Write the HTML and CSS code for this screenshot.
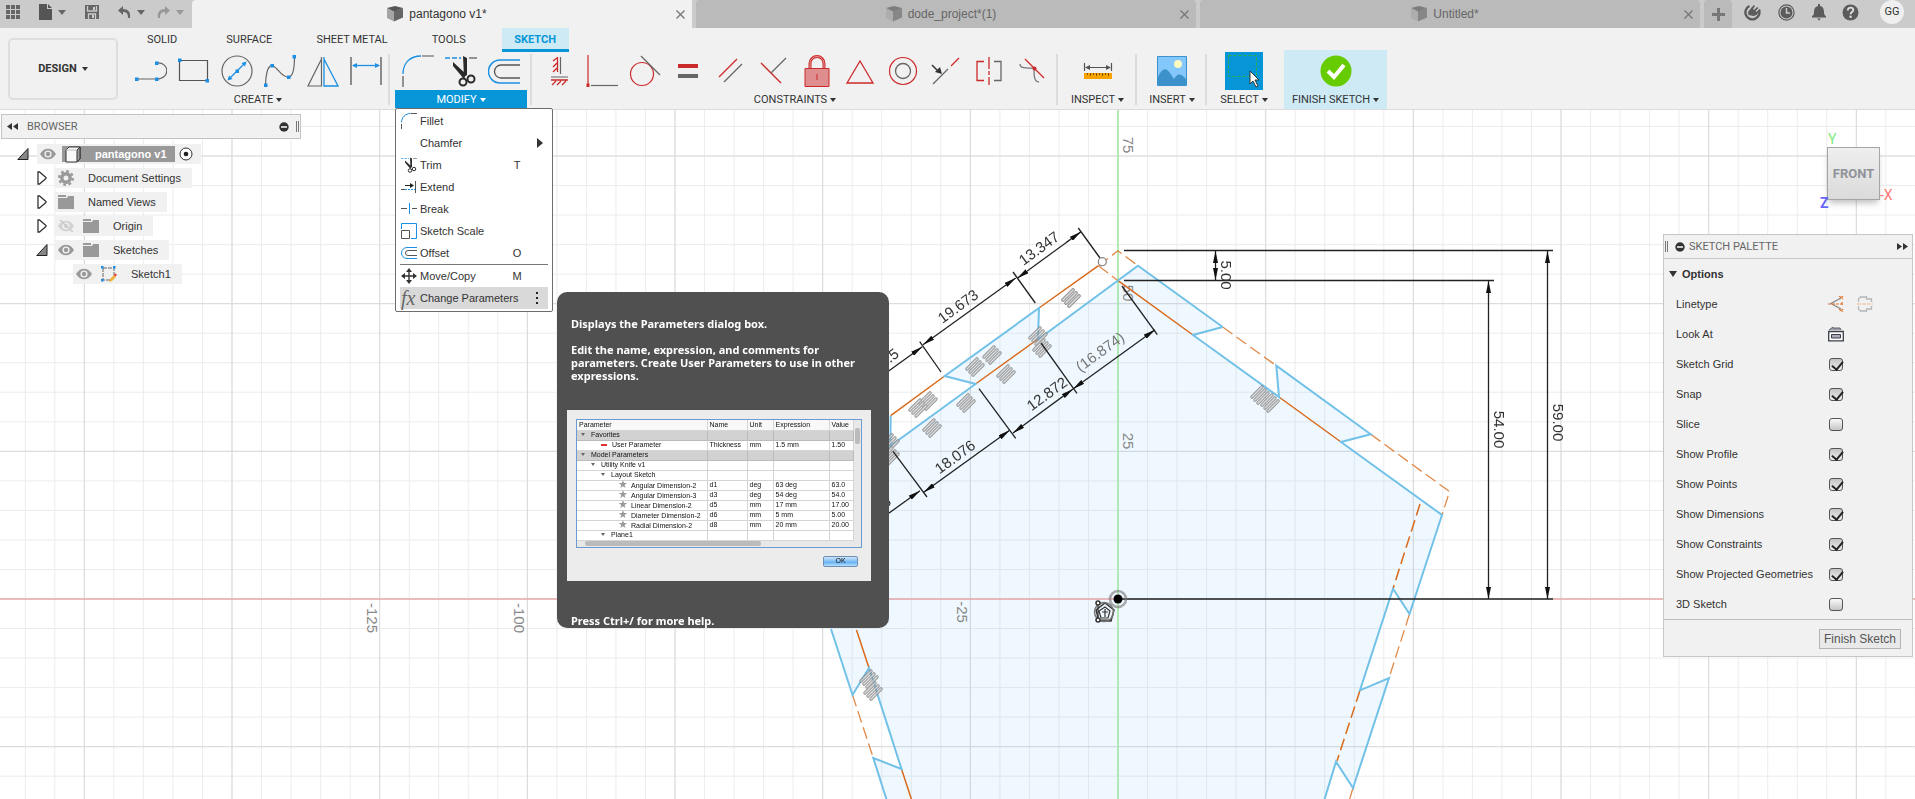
FILE: index.html
```html
<!DOCTYPE html>
<html lang="en">
<head>
<meta charset="utf-8">
<title>pantagono v1*</title>
<link rel="stylesheet" href="styles.css">
</head>
<body>
<svg class="defs" width="0" height="0" aria-hidden="true">
  <defs>
    <symbol id="cube" viewBox="0 0 16 16"><path d="M0 2 8 0l8 2-9 4z" fill="#555"/><path d="M0 2l7 3.500v10L0 12z" fill="#a5a5a5"/><path d="M7 5.500 16 2v9.500l-9 4z" fill="#666"/></symbol>
    <symbol id="eye" viewBox="0 0 16 12"><path d="M0 6C4-1 12-1 16 6 12 13 4 13 0 6z" fill="#999"/><circle cx="8" cy="6" r="3.600" fill="#f1f1f1"/><circle cx="8" cy="6" r="2.200" fill="#999"/></symbol>
    <symbol id="folder" viewBox="0 0 16 14"><path d="M0 0h8v2H0zM0 3h9l1-2h6v13H0z" fill="#999"/></symbol>
    <symbol id="closed" viewBox="0 0 10 14"><path d="M1 1v12h1.500L9 7.500v-1L2.500 1z" fill="#fff" stroke="#333" stroke-width="1.300"/></symbol>
    <symbol id="opened" viewBox="0 0 12 12"><path d="M11 .5v11H.8z" fill="#888" stroke="#222"/></symbol>
    <symbol id="fillet" viewBox="0 0 32 32"><path d="M1 19C1 8 8 1 19 1" fill="none" stroke="#1a8fe3" stroke-width="1.300"/><path d="M20 1h12M1 21v11" stroke="#555" stroke-width="1.200"/></symbol>
    <symbol id="trim" viewBox="0 0 32 32"><path d="M0 3h16" stroke="#1a8fe3" stroke-width="1.300" stroke-dasharray="5 2"/><path d="M24 3h8" stroke="#555" stroke-width="1.200"/><path d="M18 1l4 2v17l-3 2zM8 7l13 12-2 5L8 11z" fill="#2b2b2b"/><circle cx="18" cy="27" r="3.500" fill="none" stroke="#2b2b2b" stroke-width="2"/><circle cx="26" cy="24" r="3.500" fill="none" stroke="#2b2b2b" stroke-width="2"/></symbol>
    <symbol id="offset" viewBox="0 0 32 32"><path d="M32 5H12a11.500 11.500 0 0 0 0 23h20" fill="none" stroke="#1a8fe3" stroke-width="1.500"/><path d="M32 10H13a6.500 6.500 0 0 0 0 13h19" fill="none" stroke="#555" stroke-width="1.300"/></symbol>
  </defs>
</svg>

<header class="topbar">
  <nav class="quick" aria-label="Quick access">
    <button class="ico" aria-label="Data panel"><svg width="14" height="14"><path d="M0 0h4v4H0zM5 0h4v4H5zM10 0h4v4h-4zM0 5h4v4H0zM5 5h4v4H5zM10 5h4v4h-4zM0 10h4v4H0zM5 10h4v4H5zM10 10h4v4h-4z" fill="#666"/></svg></button>
    <button class="ico drop" aria-label="File"><svg width="13" height="16"><path d="M0 0h8v5h5v11H0zM9 0l4 4H9z" fill="#555"/></svg><i class="caret"></i></button>
    <button class="ico" aria-label="Save"><svg width="14" height="14"><path d="M0 0h14v14H0z" fill="#666"/><path d="M2.500 1v5h9V1M3.500 14V9h7v5" fill="none" stroke="#ccc" stroke-width="1.300"/><path d="M7 10h2v3H7zM8 2h2v3H8z" fill="#ccc"/></svg></button>
    <button class="ico drop" aria-label="Undo"><svg width="13" height="12"><path d="M5 0v3c5 0 8 3 7 9h-2c0-4-1-6-5-6v3L0 4.500z" fill="#666"/></svg><i class="caret"></i></button>
    <button class="ico drop faded" aria-label="Redo"><svg width="13" height="12"><path d="M8 0v3C3 3 0 6 1 12h2c0-4 1-6 5-6v3l5-4.500z" fill="#666"/></svg><i class="caret"></i></button>
  </nav>
  <div class="docs">
    <div class="doc current"><svg width="16" height="16"><use href="#cube"/></svg><span>pantagono v1*</span><button class="close" aria-label="Close pantagono"><svg width="9" height="9"><path d="M.5.5l8 8m0-8l-8 8" stroke="currentColor" stroke-width="1.300"/></svg></button></div>
    <div class="doc"><svg width="16" height="16"><use href="#cube"/></svg><span>dode_project*(1)</span><button class="close" aria-label="Close dode_project"><svg width="9" height="9"><path d="M.5.5l8 8m0-8l-8 8" stroke="currentColor" stroke-width="1.300"/></svg></button></div>
    <div class="doc"><svg width="16" height="16"><use href="#cube"/></svg><span>Untitled*</span><button class="close" aria-label="Close Untitled"><svg width="9" height="9"><path d="M.5.5l8 8m0-8l-8 8" stroke="currentColor" stroke-width="1.300"/></svg></button></div>
    <button class="add" aria-label="New design"><svg width="13" height="13"><path d="M5 0h3v5h5v3H8v5H5V8H0V5h5z" fill="#777"/></svg></button>
  </div>
  <div class="status">
    <button class="ico" aria-label="Extensions"><svg width="17" height="17"><path d="M5.500 2A7 7 0 1 0 15 6" fill="none" stroke="#5b5b5b" stroke-width="2.400"/><path d="M4.500 11 4 8l4-5 2-2 1 1-2 3 1 1 3-3 1.500 1-3 3 1 1 3-3 1 1-4 5-3 1z" fill="#5b5b5b"/></svg></button>
    <button class="ico" aria-label="Job status"><svg width="17" height="17"><circle cx="8.500" cy="8.500" r="7.600" fill="none" stroke="#5b5b5b" stroke-width="1.200"/><circle cx="8.500" cy="8.500" r="6" fill="#5b5b5b"/><path d="M8.500 4v5H12" fill="none" stroke="#ccc" stroke-width="1.500"/></svg></button>
    <button class="ico" aria-label="Notifications"><svg width="14" height="17"><path d="M6 0h2v2c3 .5 4 3 4 6 0 2 .5 3.500 2 4v1.500H0V12c1.500-.5 2-2 2-4 0-3 1-5.500 4-6zM5 14.500h4L7 16.500z" fill="#5b5b5b"/></svg></button>
    <button class="ico" aria-label="Help"><svg width="17" height="17"><circle cx="8.500" cy="8.500" r="8" fill="#5b5b5b"/><path d="M5.800 6.500c0-4 5.800-3.500 5.500-.3-.2 2-2.700 1.800-2.700 4" fill="none" stroke="#ddd" stroke-width="1.900"/><circle cx="8.600" cy="12.700" r="1.200" fill="#ddd"/></svg></button>
    <button class="avatar">GG</button>
  </div>
</header>

<section class="toolbar">
  <button class="design">DESIGN<i class="caret"></i></button>
  <div class="ribbon">
    <nav class="tabs">
      <button class="tab">SOLID</button><button class="tab">SURFACE</button><button class="tab">SHEET METAL</button><button class="tab">TOOLS</button><button class="tab active">SKETCH</button>
    </nav>
    <div class="groups">
      <div class="group create">
        <div class="tools">
          <button class="ico" aria-label="Line"><svg width="32" height="32"><path d="M2 24h20M22 8c13-1 13 16 0 16" fill="none" stroke="#666" stroke-width="1.200"/><path d="M0 22.500h3.500v3.500H0zM20 22.500h3.500v3.500H20zM20 6.500h3.500V10H20z" fill="#1a8fe3"/></svg></button>
          <button class="ico" aria-label="Rectangle"><svg width="32" height="32"><path d="M1.500 5.500h28v20h-28z" fill="none" stroke="#555" stroke-width="1.200"/><path d="M0 3.500h3.500V7H0zM27.500 24H31v3.500h-3.500z" fill="#1a8fe3"/></svg></button>
          <button class="ico" aria-label="Circle"><svg width="32" height="32"><circle cx="16" cy="16" r="15" fill="none" stroke="#666" stroke-width="1.200"/><path d="M8 24 24 8" stroke="#1a8fe3" stroke-width="1.200"/><path d="M14.500 14.500h3.500V18h-3.500zM25.500 6.500l-5 1.500 3.500 3.500zM6.500 25.500l5-1.500L8 20.500z" fill="#1a8fe3"/></svg></button>
          <button class="ico" aria-label="Spline"><svg width="32" height="32"><path d="M1.500 30C2 18 4 9 9 11s9 12 16 11c4-1 5.500-9 5.500-20" fill="none" stroke="#666" stroke-width="1.200"/><path d="M0 28.500h3.500V32H0zM6.500 9H10v3.500H6.500zM23 20.500h3.500V24H23zM28.500 0H32v3.500h-3.500z" fill="#1a8fe3"/></svg></button>
          <button class="ico" aria-label="Mirror"><svg width="32" height="32"><path d="M14.500 2v29H1L14.500 4" fill="none" stroke="#666" stroke-width="1.200"/><path d="M17 2v29h14L17 4" fill="none" stroke="#1a8fe3" stroke-width="1.300"/></svg></button>
          <button class="ico" aria-label="Sketch dimension"><svg width="32" height="32"><path d="M1 2v28M31 2v28" stroke="#555" stroke-width="1.300"/><path d="M3 10.500h26" stroke="#1a8fe3" stroke-width="1.300"/><path d="M2 10.500 7 8v5zM30 10.500 25 8v5z" fill="#1a8fe3"/></svg></button>
        </div>
        <button class="label">CREATE<i class="caret"></i></button>
      </div>
      <div class="group modify">
        <div class="tools">
          <button class="ico" aria-label="Fillet tool"><svg width="32" height="32"><use href="#fillet"/></svg></button>
          <button class="ico" aria-label="Trim tool"><svg width="32" height="32"><use href="#trim"/></svg></button>
          <button class="ico" aria-label="Offset tool"><svg width="32" height="32"><use href="#offset"/></svg></button>
        </div>
        <button class="label">MODIFY<i class="caret"></i></button>
        <div class="menu" role="menu">
          <button class="item"><svg width="16" height="16"><path d="M.5 9.500c0-5 4-9 9-9" fill="none" stroke="#1a8fe3"/><path d="M10 .5h6M.5 11v5" stroke="#555"/></svg><span>Fillet</span></button>
          <button class="item"><span class="blank"></span><span>Chamfer</span><i class="more"></i></button>
          <button class="item"><svg width="16" height="16"><use href="#trim"/></svg><span>Trim</span><kbd>T</kbd></button>
          <button class="item"><svg width="16" height="16"><path d="M0 10.500h4" stroke="#555"/><path d="M4 10.500h10" stroke="#1a8fe3" stroke-dasharray="2 1"/><path d="M4 6.500h6" stroke="#222"/><path d="M9 4l4 2.500L9 9z" fill="#222"/><path d="M14.500 2v12" stroke="#555"/></svg><span>Extend</span></button>
          <button class="item"><svg width="16" height="16"><path d="M0 7.500h6M11 7.500h5" stroke="#555"/><path d="M8.500 2v11" stroke="#1a8fe3"/></svg><span>Break</span></button>
          <button class="item"><svg width="16" height="16"><path d="M.5 6V.5h15v15H10" fill="none" stroke="#1a8fe3"/><path d="M.5 7.500h8v8h-8z" fill="none" stroke="#555"/></svg><span>Sketch Scale</span></button>
          <button class="item"><svg width="16" height="16"><path d="M16 2.500H6a5.500 5.500 0 0 0 0 11h10" fill="none" stroke="#1a8fe3"/><path d="M16 5.500H7a2.500 2.500 0 0 0 0 5h9" fill="none" stroke="#555"/></svg><span>Offset</span><kbd>O</kbd></button>
          <button class="item split"><svg width="16" height="16"><path d="M1 8h14M8 1v14" stroke="#333" stroke-width="1.400"/><path d="M8 0l3 4H5zM8 16l3-4H5zM0 8l4-3v6zM16 8l-4-3v6z" fill="#333"/></svg><span>Move/Copy</span><kbd>M</kbd></button>
          <button class="item hover"><em class="fx">fx</em><span>Change Parameters</span><i class="dots"></i></button>
        </div>
      </div>
      <div class="group constraints">
        <div class="tools">
          <button class="ico" aria-label="Horizontal/Vertical"><svg width="32" height="32"><path d="M14.500 2v15M14 3l-4 3M14 8l-4 4M14 13l-4 4M8 25h17M13 26l-4 4M18 26l-4 4M23 26l-4 4" stroke="#cc2a2a" stroke-width="1.300"/><path d="M17.500 2v17M8 22h17" stroke="#666" stroke-width="1.200"/></svg></button>
          <button class="ico" aria-label="Coincident"><svg width="32" height="32"><path d="M2 0v29" stroke="#cc2a2a" stroke-width="1.200"/><path d="M.5 28.500h3V32h-3z" fill="#cc2a2a"/><path d="M5 30.500h27" stroke="#666" stroke-width="1.200"/></svg></button>
          <button class="ico" aria-label="Tangent"><svg width="32" height="32"><circle cx="13" cy="19" r="11.500" fill="none" stroke="#cc2a2a" stroke-width="1.200"/><path d="M12 1l19 19" stroke="#666" stroke-width="1.200"/></svg></button>
          <button class="ico" aria-label="Equal"><svg width="32" height="32"><path d="M6 9h20v4H6z" fill="#cc2a2a"/><path d="M6 19h20v4H6z" fill="#666"/></svg></button>
          <button class="ico" aria-label="Parallel"><svg width="32" height="32"><path d="M4 22 22 4" stroke="#cc2a2a" stroke-width="1.300"/><path d="M9 27 27 9" stroke="#666" stroke-width="1.300"/></svg></button>
          <button class="ico" aria-label="Perpendicular"><svg width="32" height="32"><path d="M3 8l20 20" stroke="#cc2a2a" stroke-width="1.300"/><path d="M13 18 28 3" stroke="#666" stroke-width="1.300"/></svg></button>
          <button class="ico" aria-label="Fix"><svg width="32" height="32"><path d="M9 13V8.500a7 7 0 0 1 14 0V13" fill="none" stroke="#cc2a2a" stroke-width="3"/><path d="M9 13V8.500a7 7 0 0 1 14 0V13" fill="none" stroke="#e69a9a" stroke-width="1"/><path d="M4 13.500h24v18H4z" fill="#de8e8e" stroke="#cc2a2a"/><path d="M16 19v6" stroke="#cc2a2a"/></svg></button>
          <button class="ico" aria-label="Polygon"><svg width="32" height="32"><path d="M16 6 29 28H3z" fill="none" stroke="#cc2a2a" stroke-width="1.300"/></svg></button>
          <button class="ico" aria-label="Concentric"><svg width="32" height="32"><circle cx="16" cy="16" r="13.500" fill="none" stroke="#cc2a2a" stroke-width="1.200"/><circle cx="16" cy="16" r="7.500" fill="none" stroke="#666" stroke-width="1.300"/></svg></button>
          <button class="ico" aria-label="Midpoint"><svg width="32" height="32"><path d="M3 29 18 14" stroke="#666" stroke-width="1.300"/><path d="M21 11 29 3" stroke="#cc2a2a" stroke-width="1.300"/><path d="M2 10l6 6" stroke="#333" stroke-width="1.500"/><path d="M12 19l-7-2 5-5z" fill="#333"/></svg></button>
          <button class="ico" aria-label="Symmetry"><svg width="32" height="32"><path d="M11 6.500H4v19h7M16 2v12M16 16v4M16 22v8" fill="none" stroke="#cc2a2a" stroke-width="1.300"/><path d="M21 6.500h7v19h-7" fill="none" stroke="#666" stroke-width="1.300"/></svg></button>
          <button class="ico" aria-label="Curvature"><svg width="32" height="32"><path d="M4 9c0 5 8 4 14 4M18 13c0 7 0 14 5 14" fill="none" stroke="#777" stroke-width="1.300"/><path d="M9 4l19 19" stroke="#cc2a2a" stroke-width="1.300"/><circle cx="18.500" cy="13.500" r="2" fill="#cc2a2a"/></svg></button>
        </div>
        <button class="label">CONSTRAINTS<i class="caret"></i></button>
      </div>
      <div class="group inspect">
        <div class="tools"><button class="ico" aria-label="Measure"><svg width="32" height="32"><path d="M2.500 8v8M29.500 8v8M4 12.500h24" stroke="#555" stroke-width="1.200"/><path d="M3 12.500l5-2.500v5zM29 12.500 24 10v5z" fill="#555"/><path d="M2 18h28v6H2z" fill="#f6a300"/><path d="M5.500 18v2M8.500 18v3M11.500 18v2M14.500 18v3M17.500 18v2M20.500 18v3M23.500 18v2M26.500 18v3" stroke="#7a5200"/></svg></button></div>
        <button class="label">INSPECT<i class="caret"></i></button>
      </div>
      <div class="group insert">
        <div class="tools"><button class="ico" aria-label="Insert image"><svg width="32" height="32"><path d="M1.500 1.500h29v29h-29z" fill="#84c7fb" stroke="#3e92cc"/><path d="M2 22c4-9 8-10 12-4l4 6c3-5 6-7 12 0v6H2z" fill="#3e92cc"/><circle cx="22" cy="9" r="4" fill="#fffac2"/></svg></button></div>
        <button class="label">INSERT<i class="caret"></i></button>
      </div>
      <div class="group select">
        <div class="tools"><button class="ico picked" aria-label="Select"><svg width="38" height="38"><path d="M3.500 3.500h28v21h-28z" fill="none" stroke="#2fae4a" stroke-dasharray="3 2"/><path d="M25 19v13l3-3 3 6 2-1-3-6h4z" fill="#fff" stroke="#333"/></svg></button></div>
        <button class="label">SELECT<i class="caret"></i></button>
      </div>
      <div class="group finish">
        <div class="tools"><button class="ico" aria-label="Finish"><svg width="32" height="32"><circle cx="16" cy="16" r="15.500" fill="#66cc00"/><path d="M8 16l6 6 10-12" fill="none" stroke="#fff" stroke-width="4"/></svg></button></div>
        <button class="label">FINISH SKETCH<i class="caret"></i></button>
      </div>
    </div>
  </div>
</section>

<main class="workspace">
  <svg class="canvas" width="100%" height="100%">
    <defs>
      <pattern id="minor" patternUnits="userSpaceOnUse" x="1117.500" y="598.500" width="29.533" height="29.533"><path d="M0 .5h29.533M.5 0v29.533" stroke="#ececec"/></pattern>
      <pattern id="major" patternUnits="userSpaceOnUse" x="1117.500" y="598.500" width="147.667" height="147.667"><path d="M0 .5h147.667M.5 0v147.667" stroke="#d9d9d9"/></pattern>
      <marker id="arrow" viewBox="0 0 12 5" refX="12" refY="2.500" markerWidth="12" markerHeight="5" markerUnits="userSpaceOnUse" orient="auto-start-reverse"><path d="M0 0l12 2.500L0 5z" fill="#111"/></marker>
      <g id="bars" stroke-linecap="round">
        <path d="M-8 2 2-8M-5 5 5-5M-2 8 8-2" stroke="#888" stroke-width="3.600"/>
        <path d="M-8 2 2-8M-5 5 5-5M-2 8 8-2" stroke="#d2d2d2" stroke-width="1.400"/>
      </g>
    </defs>
    <g transform="translate(0 -110)">
      <rect y="110" width="100%" height="2000" fill="url(#minor)"/>
      <rect y="110" width="100%" height="2000" fill="url(#major)"/>
      <path d="M1138 265.700 1222.700 327 1193 335 1279 397 1276.300 365.700 1370.700 434.300 1341 442 1442 515 1409.500 614 1393 588.700 1360 690.300 1389 678 1353 788 1336 761.700 1324 801H887L873.300 758 901.500 769 869 668 852.500 695 786 492 890.300 446 975.500 384 944.700 376 1039 308 1038 339.500z" fill="#6fbdf5" fill-opacity=".11"/>
      <path d="M0 599h1118M1553 599h2000" stroke="#f08d8d"/>
      <path d="M1118 110v2000" stroke="#a5eba5" stroke-width="1.600"/>
      <g class="axis">
        <text transform="translate(1123 145) rotate(90)">75</text>
        <text transform="translate(1123 293) rotate(90)">50</text>
        <text transform="translate(1123 441) rotate(90)">25</text>
        <text transform="translate(957 612) rotate(90)">-25</text>
        <text transform="translate(514 618) rotate(90)">-100</text>
        <text transform="translate(367 618) rotate(90)">-125</text>
      </g>
      <g fill="none" stroke="#d9691b" stroke-width="1.500">
        <path d="M1098.500 265.700 1039 308M1038 339 975.500 384M944.700 376 890.700 415.700M1118 280.700 1193 335M1279 397 1341 442M856.500 630 869 668M901.500 769 912 801"/>
        <path d="M1420 504 1393 588.700M1360 690.300 1337 761" stroke-dasharray="12 5"/>
        <path d="M1098.500 265.700 1118 250.800 1138 265.700M1098.500 265.700 1118 280.700M1222.700 327 1276.300 365.700M1370.700 434.300 1449.500 491.600 1442 515M1409.500 614 1389 678M1353 788 1349 801M852.500 695 873.300 758" stroke="#e08a4a" stroke-width="1.300" stroke-dasharray="12 5"/>
      </g>
      <g fill="none" stroke="#72c1e8" stroke-width="2">
        <path d="M1222.700 327 1193 335 1279 397 1276.300 365.700 1370.700 434.300 1341 442 1442 515 1409.500 614 1393 588.700 1360 690.300 1389 678 1353 788 1336 761.700 1324 801M887 801 873.300 758 901.500 769 869 668 852.500 695 831 629M890.700 415.700 890.300 446 975.500 384 944.700 376 1039 308 1038 339.500 1138 265.700 1222.700 327"/>
      </g>
      <g opacity=".8">
        <use href="#bars" x="1071" y="298"/><use href="#bars" x="1071" y="298"/><use href="#bars" x="1038" y="336"/><use href="#bars" x="1042" y="348"/><use href="#bars" x="992" y="355"/><use href="#bars" x="975" y="367"/><use href="#bars" x="1006" y="374"/><use href="#bars" x="966" y="403"/><use href="#bars" x="928" y="401"/><use href="#bars" x="918" y="408"/><use href="#bars" x="932" y="428"/><use href="#bars" x="890" y="443"/><use href="#bars" x="890" y="456"/>
        <use href="#bars" x="1260" y="395"/><use href="#bars" x="1270" y="403"/><use href="#bars" x="869" y="679"/><use href="#bars" x="873" y="691"/>
      </g>
      <g stroke="#222" stroke-width="1.300" fill="none">
        <path d="M1078.300 228 1100 258M1013 272 1035.300 303M919.700 341.700 941 372M1122 286 1157.300 334.700M1041 343 1077 393.300M979 388.700 1015.700 438.300M893 451.300 927 497M1124 250.500H1553M1124 280.500H1494M1118 599H1553"/>
        <g marker-start="url(#arrow)" marker-end="url(#arrow)">
          <path d="M1017.300 278.300 1081 231.700"/><path d="M923 344.700 1015.700 278"/><path d="M1073 389 1155 329.700"/><path d="M1013 433 1073 389"/><path d="M923.700 492.300 1009.700 430.300"/><path d="M1215.500 251v29"/><path d="M1488.500 281v318"/><path d="M1547.500 251v348"/><path d="M800 435 922.300 346.700"/><path d="M800 577 920 490.700"/>
        </g>
      </g>
      <g class="dims">
        <text transform="translate(1042 252.500) rotate(-36)">13.347</text>
        <text transform="translate(961 310.500) rotate(-36)">19.673</text>
        <text class="ref" transform="translate(1103 356) rotate(-36)">(16.874)</text>
        <text transform="translate(1050 398) rotate(-36)">12.872</text>
        <text transform="translate(958 461) rotate(-36)">18.076</text>
        <text transform="translate(895 359.500) rotate(-36)">.5</text>
        <text transform="translate(889 506) rotate(-36)">6</text>
        <text transform="translate(1221 275) rotate(90)">5.00</text>
        <text transform="translate(1494 429.500) rotate(90)">54.00</text>
        <text transform="translate(1553 422.500) rotate(90)">59.00</text>
      </g>
      <circle cx="1102.300" cy="261.700" r="4" fill="#fff" stroke="#888" stroke-width="1.300"/>
      <circle cx="1118" cy="599" r="8" fill="none" stroke="#777" stroke-opacity=".6" stroke-width="2.600"/>
      <circle cx="1118" cy="599" r="4.500"/>
      <g fill="none" stroke="#333" stroke-width="1.500"><path d="M1105 603l9 7-3 11h-12l-3-11z"/><path d="M1105 607l5 4-2 7h-7l-2-7zM1098 604v15M1098 620h14M1105 609v8M1102 612h6" stroke-width="1.200"/><circle cx="1104" cy="612" r="9.500" stroke="#777"/><circle cx="1098" cy="603" r="2" fill="#fff"/><circle cx="1098" cy="620" r="2" fill="#fff"/></g>
    </g>
  </svg>

  <aside class="browser">
    <div class="panelhead"><svg width="11" height="7"><path d="M5 0v7L0 3.500zM11 0v7L6 3.500z" fill="#333"/></svg><span class="title">BROWSER</span><svg width="10" height="10"><circle cx="5" cy="5" r="4.700" fill="#333"/><path d="M2 5h6" stroke="#fff" stroke-width="1.500"/></svg><i class="grip"></i></div>
    <ul class="tree">
      <li class="l0"><svg width="12" height="12"><use href="#opened"/></svg><div class="node root"><svg width="16" height="12"><use href="#eye"/></svg><span class="chosen"><svg width="16" height="17"><path d="M1 4l3-3h11v12l-3 3H1z" fill="#f8f8f8" stroke="#333"/><path d="M12 4l3-3v12l-3 3z" fill="#999" stroke="#333"/><path d="M1 4h11" stroke="#bbb"/></svg><b>pantagono v1</b></span><svg width="14" height="14"><circle cx="7" cy="7" r="6" fill="#fff" stroke="#333"/><circle cx="7" cy="7" r="2.300" fill="#222"/></svg></div></li>
      <li class="l1"><svg width="10" height="14"><use href="#closed"/></svg><div class="node"><svg width="16" height="16"><circle cx="8" cy="8" r="4.200" fill="none" stroke="#999" stroke-width="3.400"/><circle cx="8" cy="8" r="6.800" fill="none" stroke="#999" stroke-width="2.400" stroke-dasharray="2.700 2.640"/></svg><span>Document Settings</span></div></li>
      <li class="l1"><svg width="10" height="14"><use href="#closed"/></svg><div class="node"><svg width="16" height="14"><use href="#folder"/></svg><span>Named Views</span></div></li>
      <li class="l1"><svg width="10" height="14"><use href="#closed"/></svg><div class="node"><svg width="16" height="12" opacity=".35"><use href="#eye"/><path d="M2 0l13 12" stroke="#888" stroke-width="1.500"/></svg><svg class="second" width="16" height="14"><use href="#folder"/></svg><span>Origin</span></div></li>
      <li class="l1"><svg width="12" height="12"><use href="#opened"/></svg><div class="node"><svg width="16" height="12"><use href="#eye"/></svg><svg class="second" width="16" height="14"><use href="#folder"/></svg><span>Sketches</span></div></li>
      <li class="l2"><div class="node"><svg width="16" height="12"><use href="#eye"/></svg><svg class="second" width="16" height="16"><path d="M2 2h11v8M2 2v12h7" fill="none" stroke="#666" stroke-dasharray="4 1"/><path d="M0 0h2.500v2.500H0zM12 0h2.500v2.500H12zM0 13h2.500v2.500H0z" fill="#1a8fe3"/><path d="M8 16l1-3 4-4 2 2-4 4z" fill="#f2b33d"/><path d="M13 8.500 14.500 7.500l1.500 1.500-1.500 1.500z" fill="#e33"/></svg><span>Sketch1</span></div></li>
    </ul>
  </aside>

  <div class="tip" role="tooltip">
    <p>Displays the Parameters dialog box.</p>
    <p>Edit the name, expression, and comments for parameters. Create User Parameters to use in other expressions.</p>
    <div class="shot">
      <div class="frame">
        <table>
          <colgroup><col class="c1"><col class="c2"><col class="c3"><col class="c4"><col class="c5"></colgroup>
          <thead><tr><th>Parameter</th><th>Name</th><th>Unit</th><th>Expression</th><th>Value</th></tr></thead>
          <tbody>
            <tr class="band"><td class="d0"><i></i>Favorites</td><td></td><td></td><td></td><td></td></tr>
            <tr><td class="user"><i></i>User Parameter</td><td>Thickness</td><td>mm</td><td>1.5 mm</td><td>1.50</td></tr>
            <tr class="band"><td class="d0"><i></i>Model Parameters</td><td></td><td></td><td></td><td></td></tr>
            <tr><td class="d1"><i></i>Utility Knife v1</td><td></td><td></td><td></td><td></td></tr>
            <tr><td class="d2"><i></i>Layout Sketch</td><td></td><td></td><td></td><td></td></tr>
            <tr><td class="star"><b>★</b>Angular Dimension-2</td><td>d1</td><td>deg</td><td>63 deg</td><td>63.0</td></tr>
            <tr><td class="star"><b>★</b>Angular Dimension-3</td><td>d3</td><td>deg</td><td>54 deg</td><td>54.0</td></tr>
            <tr><td class="star"><b>★</b>Linear Dimension-2</td><td>d5</td><td>mm</td><td>17 mm</td><td>17.00</td></tr>
            <tr><td class="star"><b>★</b>Diameter Dimension-2</td><td>d6</td><td>mm</td><td>5 mm</td><td>5.00</td></tr>
            <tr><td class="star"><b>★</b>Radial Dimension-2</td><td>d8</td><td>mm</td><td>20 mm</td><td>20.00</td></tr>
            <tr><td class="d2"><i></i>Plane1</td><td></td><td></td><td></td><td></td></tr>
          </tbody>
        </table>
        <div class="vbar"><i></i></div>
        <div class="hbar"><i></i></div>
      </div>
      <button class="ok">OK</button>
    </div>
    <p class="help">Press Ctrl+/ for more help.</p>
  </div>

  <div class="viewcube">
    <span class="y">Y</span><button class="face">FRONT</button><span class="x">-X</span><span class="z">Z</span>
  </div>

  <aside class="palette">
    <div class="panelhead"><i class="grip"></i><svg width="10" height="10"><circle cx="5" cy="5" r="4.700" fill="#333"/><path d="M2 5h6" stroke="#fff" stroke-width="1.500"/></svg><span class="title">SKETCH PALETTE</span><svg width="11" height="7"><path d="M0 0v7l5-3.500zM6 0v7l5-3.500z" fill="#333"/></svg></div>
    <h2><i class="caret"></i>Options</h2>
    <div class="rows">
      <div class="row"><span>Linetype</span><span class="pair"><button class="ico" aria-label="Construction"><svg width="16" height="16"><path d="M13 2 3 7.500 13 13" fill="none" stroke="#888" stroke-width="1.300"/><path d="M0 8h16M14 6v4M11 0l4 3M15 0l-3 3M11 13l4 3M15 13l-3 3" stroke="#e0772b" stroke-width="1.200" stroke-dasharray="3 1"/></svg></button><button class="ico" aria-label="Centerline"><svg width="16" height="16"><path d="M1.500 6V3l2-2h6v2h5v3M1.500 10v3l2 2h6v-2h5v-3" fill="none" stroke="#b5b5b5" stroke-width="1.300"/><path d="M0 8h16" stroke="#edb98d" stroke-dasharray="4 1"/></svg></button></span></div>
      <div class="row"><span>Look At</span><button class="ico" aria-label="Look At"><svg width="16" height="16"><path d="M.7 5.500h14.600v9.300H.7z" fill="#fff" stroke="#3a3f4d" stroke-width="1.300"/><path d="M3.500 8.500h9v3.500h-9z" fill="#aab" stroke="#3a3f4d"/><path d="M1 4l4-3v1h7l1 2" fill="#99a" stroke="#666"/></svg></button></div>
      <label class="row"><span>Sketch Grid</span><input type="checkbox" checked></label>
      <label class="row"><span>Snap</span><input type="checkbox" checked></label>
      <label class="row"><span>Slice</span><input type="checkbox"></label>
      <label class="row"><span>Show Profile</span><input type="checkbox" checked></label>
      <label class="row"><span>Show Points</span><input type="checkbox" checked></label>
      <label class="row"><span>Show Dimensions</span><input type="checkbox" checked></label>
      <label class="row"><span>Show Constraints</span><input type="checkbox" checked></label>
      <label class="row"><span>Show Projected Geometries</span><input type="checkbox" checked></label>
      <label class="row"><span>3D Sketch</span><input type="checkbox"></label>
    </div>
    <footer><button class="done">Finish Sketch</button></footer>
  </aside>
</main>
</body>
</html>
```
FILE: styles.css
```css
* { box-sizing: border-box; }
body {
  margin: 0;
  min-height: 100vh;
  display: flex;
  flex-direction: column;
  overflow: hidden;
  background: #fff;
  color: #333;
  font: 11px/16px "Liberation Sans", Arial, sans-serif;
}
button {
  margin: 0;
  padding: 0;
  border: 0;
  background: none;
  color: inherit;
  font: inherit;
}
svg { display: block; flex: none; }
.defs { position: absolute; }
.ico { display: flex; align-items: center; }
.caret {
  border: 3px solid transparent;
  border-top: 4px solid currentColor;
  border-bottom: 0;
}

/* Title bar */
.topbar { display: flex; height: 28px; background: #cbcbcb; }
.quick {
  display: flex;
  align-items: center;
  gap: 19px;
  width: 192px;
  padding: 0 8px 4px 6px;
  color: #666;
}
.quick .drop { gap: 6px; }
.quick .caret { border-width: 5px 4px 0; }
.quick .faded { opacity: .5; margin-left: -7px; }
.docs { display: flex; flex: 1; gap: 4px; font-size: 12px; }
.doc {
  flex: 1;
  display: flex;
  align-items: center;
  gap: 6px;
  padding: 0 7px 0 12px;
  border-radius: 4px 4px 0 0;
  background: #bababa;
  color: #666;
}
.doc > svg { margin-left: auto; opacity: .6; }
.doc.current { background: #f1f1f1; color: #333; border-radius: 4px 0 0 0; }
.doc.current > svg { opacity: 1; }
.close { margin-left: auto; color: #777; }
.add {
  display: flex;
  align-items: center;
  justify-content: center;
  width: 28px;
  border-radius: 4px 4px 0 0;
  background: #bababa;
}
.status {
  display: flex;
  align-items: center;
  justify-content: space-between;
  width: 183px;
  padding: 0 11px 4px 12px;
}
.avatar {
  width: 24px;
  height: 24px;
  margin-left: 4px;
  border-radius: 50%;
  background: #efefef;
  font-family: Roboto, sans-serif;
}

/* Ribbon */
.toolbar {
  position: relative;
  z-index: 2;
  display: flex;
  height: 82px;
  border-bottom: 1px solid #dcdcdc;
  background: #f1f1f1;
  font-family: Roboto, sans-serif;
}
.design {
  display: flex;
  align-items: center;
  justify-content: center;
  gap: 5px;
  width: 110px;
  height: 62px;
  margin: 10px 8px;
  border: 2px solid #dedede;
  border-radius: 5px;
  font-weight: 700;
}
.ribbon { flex: 1; }
.tabs { display: flex; height: 24px; padding-left: 5px; }
.tab { padding: 0 16px; margin-right: 11px; }
.tab + .tab { padding: 0 22px; margin-right: 0; }
.tab.active,
.tab + .tab.active {
  width: 67px;
  margin-left: 14px;
  padding: 2px 0 0;
  border-bottom: 3px solid #0696d7;
  background: #cdeaf5;
  color: #0696d7;
  font-weight: 700;
}
.groups { display: flex; height: 57px; }
.group {
  position: relative;
  display: flex;
  flex-direction: column;
}
.tools {
  display: flex;
  align-items: center;
  justify-content: center;
  gap: 11px;
  height: 38px;
}
.label {
  display: flex;
  align-items: center;
  justify-content: center;
  gap: 3px;
  height: 18px;
  padding-top: 2px;
  white-space: nowrap;
}
.create { width: 264px; }
.modify { width: 132px; margin: 0 5px; }
.modify .label { background: #0696d7; color: #fff; }
.constraints { width: 526px; }
.inspect { width: 79px; }
.insert { width: 70px; }
.select { width: 74px; }
.create::after, .constraints::before, .constraints::after, .inspect::after, .insert::after {
  content: "";
  position: absolute;
  top: 2px;
  bottom: 4px;
  right: 0;
  width: 2px;
  background: #dcdcdc;
}
.constraints::before { right: auto; left: -2px; }
.picked { background: #0696d7; }
.finish {
  width: 103px;
  margin: -2px 0 0 3px;
  padding-top: 2px;
  background: #cdeaf5;
}

/* Drop-down menu */
.menu {
  position: absolute;
  top: 100%;
  left: 0;
  width: 158px;
  margin-top: -1px;
  padding: 1px 4px 2px;
  border: 1px solid #6d6d6d;
  border-radius: 2px;
  background: #fff;
  font-family: "Liberation Sans", Arial, sans-serif;
}
.item {
  display: flex;
  align-items: center;
  gap: 3px;
  width: 100%;
  height: 22px;
  padding: 0 5px 0 1px;
  white-space: nowrap;
}
.item.split { height: 23px; border-top: 1px solid #777; }
.item.hover { background: #d9d9d9; }
.blank, .fx { width: 16px; flex: none; }
.fx { font: italic 20px/18px "Liberation Serif", serif; color: #666; text-align: left; }
.item kbd { width: 18px; margin-left: auto; margin-right: 17px; font: inherit; }
.more {
  margin-left: auto;
  border: 5px solid transparent;
  border-left: 6px solid #333;
  border-right: 0;
}
.dots {
  width: 2px;
  height: 2px;
  margin: 0 5px 0 auto;
  background: #222;
  box-shadow: 0 -5px #222, 0 5px #222;
}

/* Workspace */
.workspace {
  position: relative;
  flex: 1;
  display: flex;
  justify-content: space-between;
  align-items: flex-start;
}
.canvas { position: absolute; inset: 0; }
.axis text, .dims text { font-size: 15px; text-anchor: middle; fill: #333; }
.axis text { fill: #888; }
.dims .ref { fill: #777; }

.browser { position: relative; width: 300px; margin: 4px 0 0 1px; }
.panelhead {
  display: flex;
  align-items: center;
  gap: 10px;
  height: 25px;
  padding: 0 3px 0 5px;
  border: 1px solid #c4c4c4;
  background: #f1f1f1;
  color: #666;
  font-family: Roboto, sans-serif;
}
.panelhead .title { flex: 1; }
.grip { width: 3px; height: 11px; border: 1px solid #777; border-width: 0 1px; }
.browser .panelhead { padding-right: 1px; gap: 7px; }
.browser .panelhead .title { padding-left: 2px; }
.tree { margin: 3px 0 0; padding: 0; list-style: none; }
.tree li { display: flex; align-items: center; height: 24px; }
.l0 { padding-left: 16px; gap: 8px; }
.l1 { padding-left: 35px; }
.l1 > svg { width: 12px; margin-right: 7px; }
.l2 { padding-left: 72px; }
.node {
  display: flex;
  align-items: center;
  height: 20px;
  padding: 0 11px 0 3px;
  background: #f1f1f1;
}
.node > span { margin-left: 14px; }
.node .second { margin-left: 9px; }
.node.root { padding-right: 8px; }
.node .chosen {
  display: flex;
  align-items: center;
  gap: 14px;
  height: 16px;
  margin: 0 4px 0 6px;
  padding: 0 8px 0 3px;
  background: #999;
  color: #fff;
}

/* Tooltip */
.tip {
  position: absolute;
  top: 182px;
  left: 557px;
  width: 332px;
  padding: 25px 14px 1px;
  border-radius: 10px;
  background: #505050;
  color: #fff;
  font: 700 11px/13px "Noto Sans", sans-serif;
}
.tip p { margin: 0 0 13px; }
.shot {
  display: flex;
  flex-direction: column;
  align-items: flex-end;
  gap: 8px;
  width: 304px;
  height: 171px;
  margin: 28px 0 33px -4px;
  padding: 9px 9px 0;
  background: #ececec;
  color: #111;
  font: 7px/8px "Liberation Sans", Arial, sans-serif;
}
.frame {
  display: grid;
  grid-template-columns: 1fr 7px;
  width: 286px;
  border: 1px solid #6b9bd0;
  background: #fff;
}
.frame table { width: 100%; table-layout: fixed; border-collapse: collapse; }
.c1 { width: 130px; }
.c2 { width: 40px; }
.c3 { width: 26px; }
.c4 { width: 56px; }
.frame th, .frame td {
  height: 10px;
  padding: 0 0 0 2px;
  border: solid #d5d5d5;
  border-width: 0 1px 1px 0;
  text-align: left;
  font-weight: 400;
  white-space: nowrap;
}
.frame th { background: #f8f8f8; }
.frame .band td { background: #d2d2d2; border-color: #bbb; }
.frame td i {
  display: inline-block;
  margin: 0 6px 1px 2px;
  border: 2px solid transparent;
  border-top: 3px solid #666;
  border-bottom: 0;
}
.frame .d1 { padding-left: 12px; }
.frame .d2 { padding-left: 22px; }
.frame .user { padding-left: 22px; }
.frame .user i { width: 6px; height: 2px; border: 0; background: #d33; margin-right: 5px; }
.frame .star { padding-left: 41px; }
.frame .star b { display: inline-block; width: 13px; color: #999; font: 11px/8px "DejaVu Sans", sans-serif; }
.vbar, .hbar { background: #e8e8e8; }
.vbar i { display: block; width: 5px; height: 16px; margin: 8px 1px; background: #bbb; border-radius: 2px; }
.hbar { height: 6px; grid-column: 1 / -1; padding-left: 8px; }
.hbar i { display: block; width: 176px; height: 5px; background: #bbb; border-radius: 2px; }
.ok {
  width: 35px;
  height: 11px;
  margin-right: 4px;
  border: 1px solid #6f8fb5;
  border-radius: 2px;
  background: linear-gradient(#cfe6fb, #6cb4f5 60%, #b5e0ff);
  color: #111;
}
.tip .help { margin: 0; }

/* View cube */
.viewcube {
  position: absolute;
  top: 37px;
  right: 35px;
  width: 53px;
  height: 53px;
  font: 700 14px/14px Roboto, sans-serif;
}
.face {
  width: 100%;
  height: 100%;
  border: 1px solid #a5a5a5;
  background: linear-gradient(#eeeeeef0, #d8d8d8f0);
  box-shadow: 0 5px 6px -2px #8888;
  color: #8f9298;
  font-size: 13px;
}
.viewcube span { position: absolute; font-weight: 400; white-space: nowrap; }
.viewcube .y { left: 1px; top: -15px; color: #7dea7d; }
.viewcube .x { left: 53px; top: 41px; color: #f77; }
.viewcube .z { left: -7px; top: 49px; color: #66f; font-weight: 700; }

/* Sketch palette */
.palette {
  position: relative;
  width: 250px;
  margin: 124px 2px 0 0;
  border: 1px solid #c6c6c6;
  background: #f1f1f1;
}
.palette .panelhead {
  gap: 4px;
  height: 24px;
  padding: 0 4px 0 1px;
  border: 0;
  border-bottom: 1px solid #c6c6c6;
}
.palette .panelhead .grip { margin-right: 3px; }
.palette h2 {
  display: flex;
  align-items: center;
  gap: 5px;
  height: 30px;
  margin: 0;
  padding-left: 5px;
  font-size: 11px;
}
.palette h2 .caret { border-width: 6px 4px 0; }
.row {
  display: grid;
  grid-template-columns: 152px 1fr;
  align-items: center;
  height: 30px;
  padding-left: 12px;
}
.pair { display: flex; gap: 13px; }
.row input {
  appearance: none;
  position: relative;
  width: 14px;
  height: 13px;
  margin: 0 0 0 1px;
  border: 1px solid #555;
  border-radius: 3px;
  background: linear-gradient(#fafafa, #c4c4c4);
}
.row input:checked { background: linear-gradient(#c4c4c4, #ededed); }
.row input:checked::after {
  content: "";
  position: absolute;
  left: 4px;
  top: 0;
  width: 5px;
  height: 9px;
  border: solid #222;
  border-width: 0 2px 2px 0;
  transform: rotate(40deg);
}
.palette footer {
  display: flex;
  justify-content: flex-end;
  padding: 9px 11px 7px;
  border-top: 1px solid #bdbdbd;
}
.done {
  width: 82px;
  height: 20px;
  border: 1px solid #b5b5b5;
  background: #e9e9e9;
  color: #555;
  font-size: 12px;
}
```
